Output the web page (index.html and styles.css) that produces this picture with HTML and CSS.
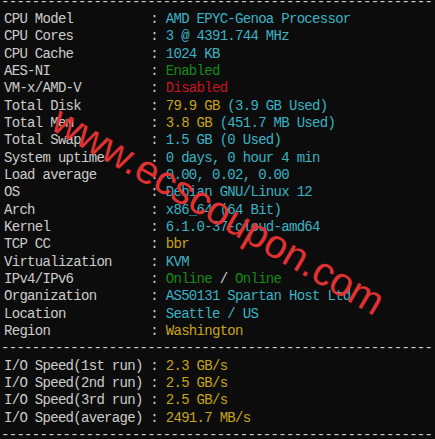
FILE: index.html
```html
<!DOCTYPE html>
<html>
<head>
<meta charset="utf-8">
<link rel="stylesheet" href="styles.css">
</head>
<body>
<div class="term">
<div class="line sep">--------------------------------------------------------</div>
<div class="line"><span class="k">CPU Model         </span> : <span class="c">AMD EPYC-Genoa Processor</span></div>
<div class="line"><span class="k">CPU Cores         </span> : <span class="c">3 @ 4391.744 MHz</span></div>
<div class="line"><span class="k">CPU Cache         </span> : <span class="c">1024 KB</span></div>
<div class="line"><span class="k">AES-NI            </span> : <span class="g">Enabled</span></div>
<div class="line"><span class="k">VM-x/AMD-V        </span> : <span class="r">Disabled</span></div>
<div class="line"><span class="k">Total Disk        </span> : <span class="y">79.9 GB</span> <span class="c">(3.9 GB Used)</span></div>
<div class="line"><span class="k">Total Mem         </span> : <span class="y">3.8 GB</span> <span class="c">(451.7 MB Used)</span></div>
<div class="line"><span class="k">Total Swap        </span> : <span class="c">1.5 GB (0 Used)</span></div>
<div class="line"><span class="k">System uptime     </span> : <span class="c">0 days, 0 hour 4 min</span></div>
<div class="line"><span class="k">Load average      </span> : <span class="c">0.00, 0.02, 0.00</span></div>
<div class="line"><span class="k">OS                </span> : <span class="c">Debian GNU/Linux 12</span></div>
<div class="line"><span class="k">Arch              </span> : <span class="c">x86_64 (64 Bit)</span></div>
<div class="line"><span class="k">Kernel            </span> : <span class="c">6.1.0-37-cloud-amd64</span></div>
<div class="line"><span class="k">TCP CC            </span> : <span class="y">bbr</span></div>
<div class="line"><span class="k">Virtualization    </span> : <span class="c">KVM</span></div>
<div class="line"><span class="k">IPv4/IPv6         </span> : <span class="g">Online</span> / <span class="g">Online</span></div>
<div class="line"><span class="k">Organization      </span> : <span class="c">AS50131 Spartan Host Ltd</span></div>
<div class="line"><span class="k">Location          </span> : <span class="c">Seattle / US</span></div>
<div class="line"><span class="k">Region            </span> : <span class="y">Washington</span></div>
<div class="line sep">--------------------------------------------------------</div>
<div class="line"><span class="k">I/O Speed(1st run)</span> : <span class="y">2.3 GB/s</span></div>
<div class="line"><span class="k">I/O Speed(2nd run)</span> : <span class="y">2.5 GB/s</span></div>
<div class="line"><span class="k">I/O Speed(3rd run)</span> : <span class="y">2.5 GB/s</span></div>
<div class="line"><span class="k">I/O Speed(average)</span> : <span class="y">2491.7 MB/s</span></div>
<div class="line sep">--------------------------------------------------------</div>
</div>
<div class="watermark">www.ecscoupon.com</div>
</body>
</html>
```
FILE: styles.css
```css
html, body {
  margin: 0;
  padding: 0;
  background: #0c0c0c;
  width: 435px;
  height: 439px;
  overflow: hidden;
}
body {
  position: relative;
}
.term {
  margin-top: -6.5px;
  padding-left: 4px;
  font-family: "Liberation Mono", monospace;
  font-size: 14px;
  letter-spacing: -0.7px;
  line-height: 17.35px;
  color: #cccccc;
}
.line {
  white-space: pre;
}
.sep {
  margin-left: -3px;
}
.k { color: #cccccc; }
.c { color: #3ab3c4; }
.y { color: #c8a418; }
.g { color: #168a18; }
.r { color: #c8141f; }
.watermark {
  position: absolute;
  left: 65.6px;
  top: 99px;
  font-family: "Liberation Sans", Arial, sans-serif;
  font-size: 40px;
  line-height: 40px;
  color: #e03232;
  white-space: nowrap;
  transform: rotate(30deg);
  transform-origin: 0 0;
}
```
